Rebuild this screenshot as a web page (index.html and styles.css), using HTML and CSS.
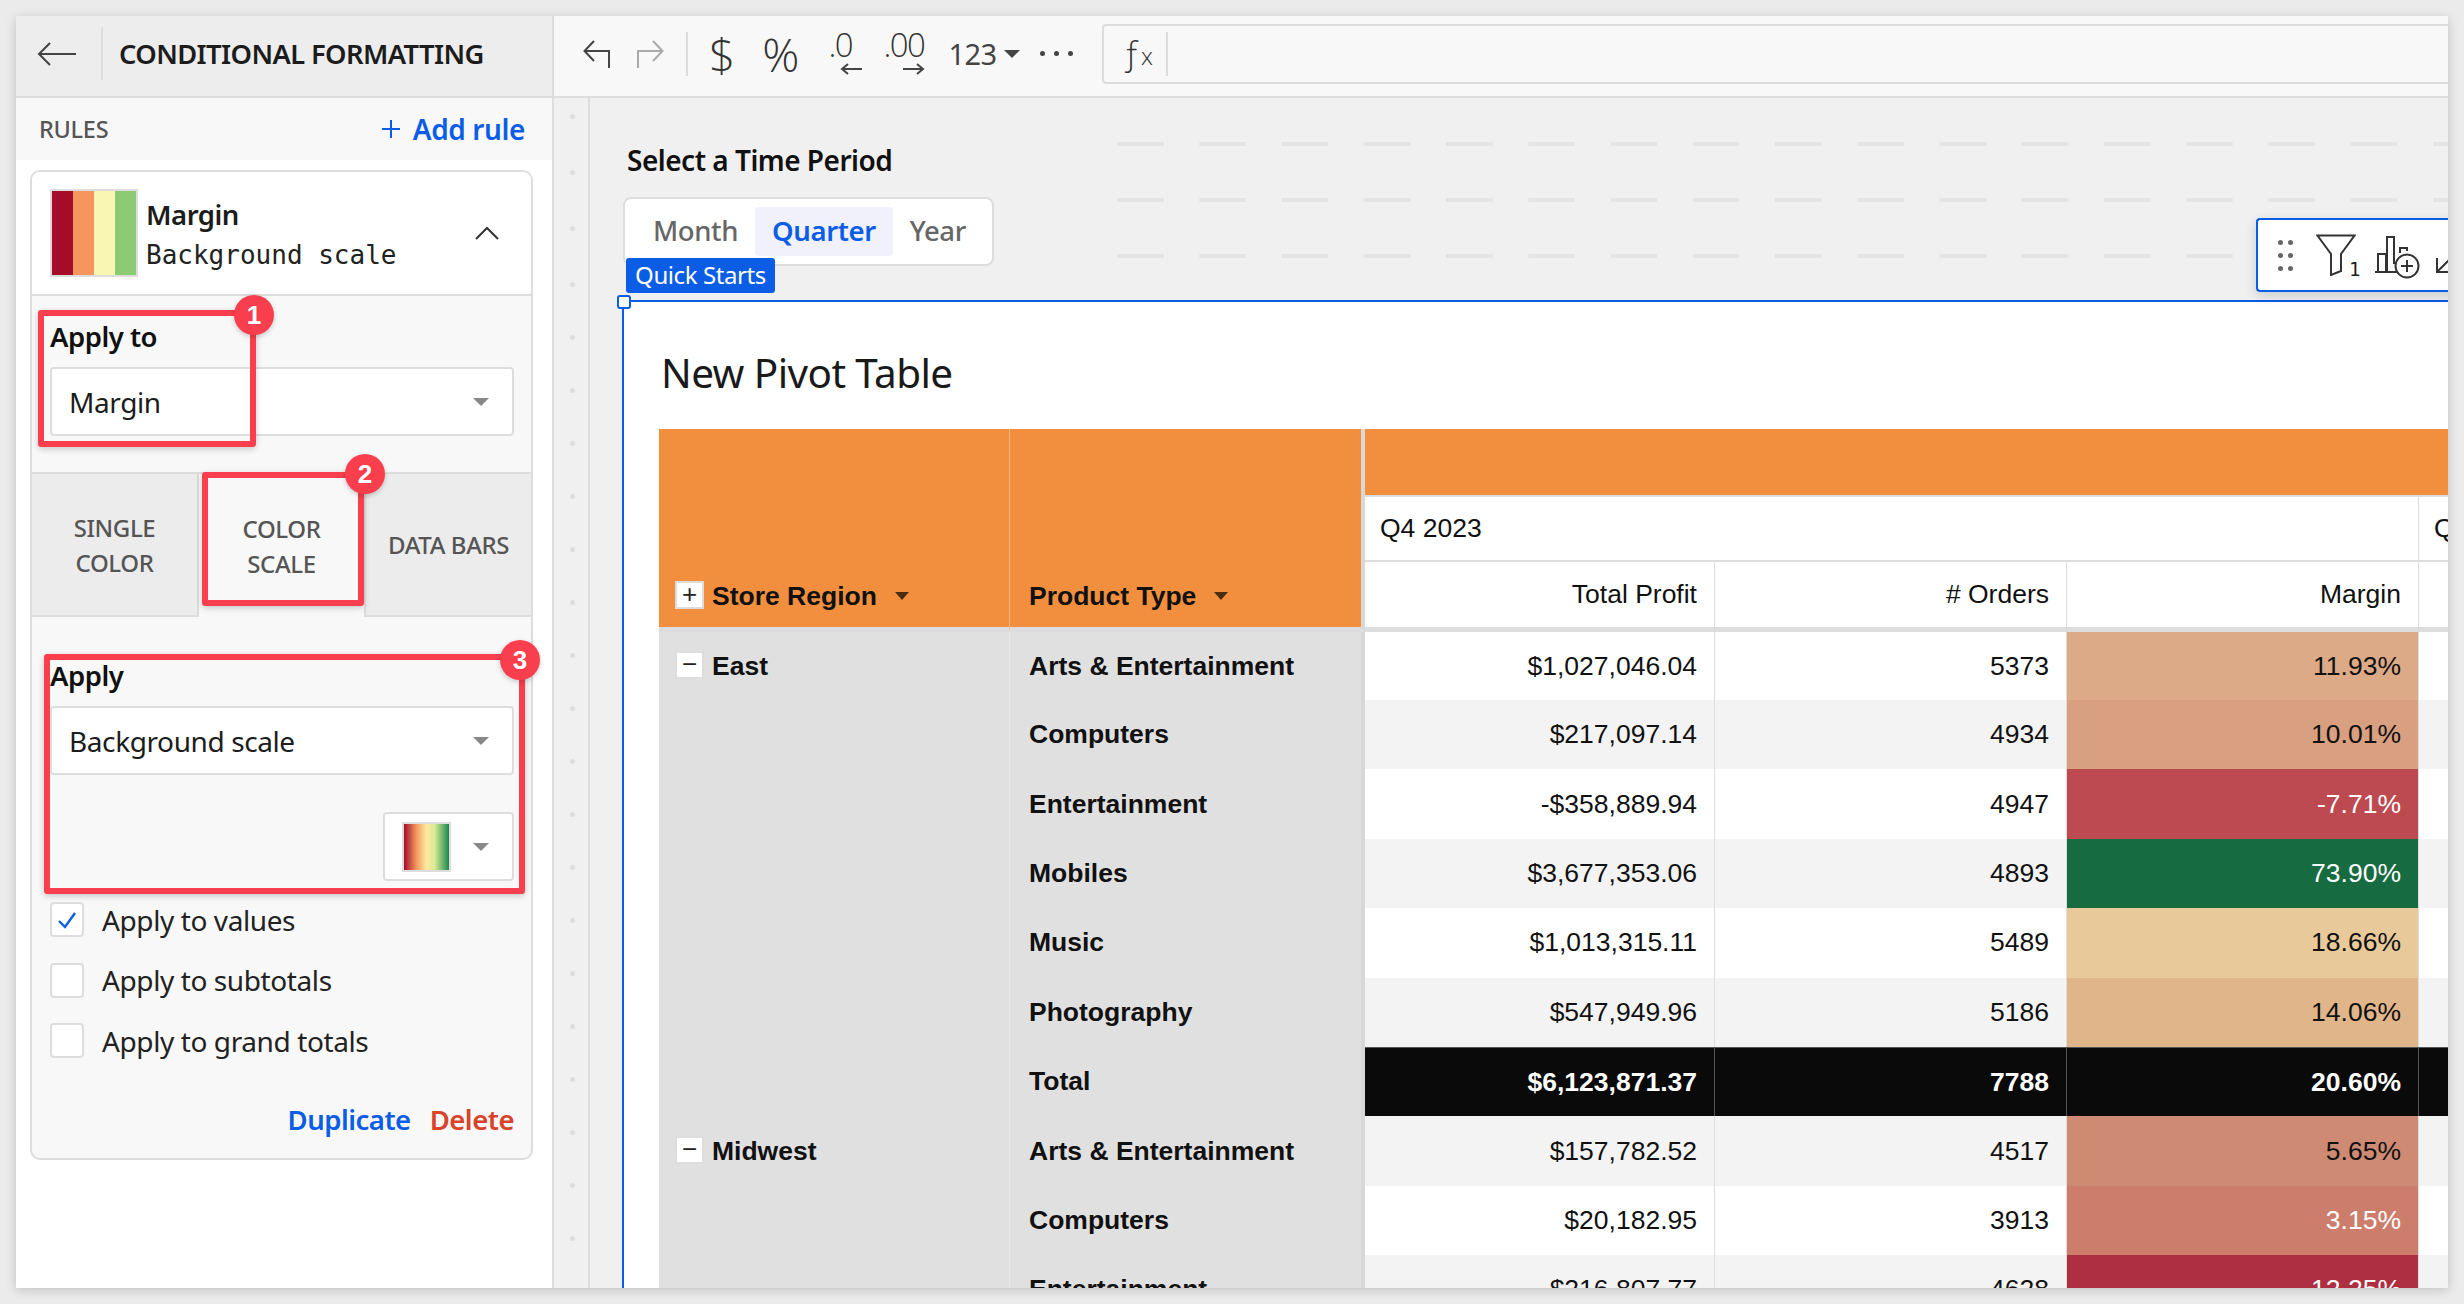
FILE: index.html
```html
<!DOCTYPE html>
<html>
<head>
  <title>Conditional formatting</title>
  <link rel="stylesheet" href="styles.css">
</head>
<body>
<div class="window">

  <!-- panneau gauche -->
  <aside class="panel">
    <div class="panel-head">
      <svg class="back" width="40" height="24" viewBox="0 0 40 24"><path d="M39 12H2M13 1 2 12l11 11" fill="none" stroke="#444" stroke-width="2"/></svg>
      <h1>CONDITIONAL FORMATTING</h1>
    </div>
    <div class="rules-bar">
      <span class="rules-label">RULES</span>
      <span class="add-rule"><svg width="18" height="18" viewBox="0 0 18 18"><path d="M9 0v18M0 9h18" stroke="#0b5de6" stroke-width="2"/></svg>Add rule</span>
    </div>

    <div class="rule-card">
      <div class="rule-head">
        <div class="swatch"><i class="c1"></i><i class="c2"></i><i class="c3"></i><i class="c4"></i></div>
        <div class="rule-title">
          <b>Margin</b>
          <code>Background scale</code>
        </div>
        <svg class="chevron" width="24" height="14" viewBox="0 0 24 14"><path d="M1 13 12 2l11 11" fill="none" stroke="#333" stroke-width="2"/></svg>
      </div>

      <div class="rule-field first">
        <label>Apply to</label>
        <div class="select"><span>Margin</span><i class="caret"></i></div>
      </div>

      <div class="tabs">
        <div class="tab">SINGLE<br>COLOR</div>
        <div class="tab active">COLOR<br>SCALE</div>
        <div class="tab">DATA BARS</div>
      </div>

      <div class="rule-field">
        <label>Apply</label>
        <div class="select"><span>Background scale</span><i class="caret"></i></div>
        <div class="scale-row">
          <div class="select scale-select"><i class="gradient"></i><i class="caret"></i></div>
        </div>
      </div>

      <div class="checks">
        <div class="check"><span class="box"><svg width="20" height="18" viewBox="0 0 20 18"><path d="M2 10l6 6L18 2" fill="none" stroke="#0b5de6" stroke-width="2.4"/></svg></span>Apply to values</div>
        <div class="check"><span class="box"></span>Apply to subtotals</div>
        <div class="check"><span class="box"></span>Apply to grand totals</div>
      </div>

      <div class="rule-actions">
        <span class="duplicate">Duplicate</span>
        <span class="delete">Delete</span>
      </div>
    </div>

    <!-- annotations rouges -->
    <div class="mark mark1"><span class="badge">1</span></div>
    <div class="mark mark2"><span class="badge">2</span></div>
    <div class="mark mark3"><span class="badge">3</span></div>
  </aside>

  <div class="main">
    <div class="toolbar">
      <svg class="undo" width="28" height="30" viewBox="0 0 28 30"><path d="M26 29V12H2M11 2 1.500 12 11 22" fill="none" stroke="#444" stroke-width="2"/></svg>
      <svg class="redo" width="28" height="30" viewBox="0 0 28 30"><path d="M2 29V12h24M17 2l9.500 10L17 22" fill="none" stroke="#aaa" stroke-width="2"/></svg>
      <span class="tb-sep"></span>
      <span class="glyph dollar">$</span>
      <span class="glyph percent">%</span>
      <span class="decimal less">.0<svg width="22" height="12" viewBox="0 0 22 12"><path d="M22 6H2M8 1 2 6l6 5" fill="none" stroke="#444" stroke-width="2"/></svg></span>
      <span class="decimal more">.00<svg width="22" height="12" viewBox="0 0 22 12"><path d="M0 6h20M14 1l6 5-6 5" fill="none" stroke="#444" stroke-width="2"/></svg></span>
      <span class="num-format">123</span>
      <i class="tb-caret"></i>
      <span class="more-dots"><i></i><i></i><i></i></span>
      <div class="formula">
        <span class="fx">ƒ<small>x</small></span>
        <span class="fx-sep"></span>
      </div>
    </div>

    <div class="work">
      <div class="ruler">
        <div class="ruler-top"><i></i><i></i><i></i></div>
        <div class="ruler-rest"><i></i><i></i><i></i><i></i><i></i><i></i><i></i><i></i><i></i><i></i><i></i><i></i><i></i><i></i><i></i><i></i><i></i><i></i><i></i><i></i></div>
      </div>

      <div class="canvas">
        <div class="dashes"></div>

        <div class="control">
          <div class="control-label">Select a Time Period</div>
          <div class="segment">
            <span>Month</span>
            <span class="on">Quarter</span>
            <span>Year</span>
          </div>
        </div>

        <div class="floating">
          <span class="grip"><i></i><i></i><i></i><i></i><i></i><i></i></span>
          <svg width="40" height="42" viewBox="0 0 40 42"><path d="M1.500 1.500h37L25 20v17l-10 4V20z" fill="none" stroke="#333" stroke-width="2"/></svg>
          <sub>1</sub>
          <svg class="chart-add" width="46" height="44" viewBox="0 0 46 44"><path d="M1 37h22M4 37V19h8v18M13 37V2h7v27M26 18v-5h7v3" fill="none" stroke="#333" stroke-width="2"/><circle cx="33" cy="31" r="11.500" fill="#fff" stroke="#333" stroke-width="2"/><path d="M33 25v12M27 31h12" stroke="#333" stroke-width="2"/></svg>
          <svg class="resize" width="20" height="16" viewBox="0 0 20 16"><path d="M2 1v14h12M2 15 16 1" fill="none" stroke="#333" stroke-width="2"/></svg>
        </div>

        <div class="card">
          <span class="tag">Quick Starts</span>
          <span class="handle"></span>
          <h2>New Pivot Table</h2>
          <table class="pivot">
            <colgroup>
              <col class="w-dim"><col class="w-dim2"><col class="w-m"><col class="w-m2"><col class="w-m2"><col class="w-m2">
            </colgroup>
            <thead>
              <tr class="h1">
                <th class="dim" rowspan="3"><span class="tree">+</span>Store Region<i class="th-caret"></i></th>
                <th class="dim dim2" rowspan="3">Product Type<i class="th-caret"></i></th>
                <th class="band" colspan="4"></th>
              </tr>
              <tr class="h2">
                <th class="period" colspan="3">Q4 2023</th>
                <th class="period">Q3 2023</th>
              </tr>
              <tr class="h3">
                <th>Total Profit</th>
                <th># Orders</th>
                <th>Margin</th>
                <th></th>
              </tr>
            </thead>
            <tbody>
              <tr class="row1">
                <td class="region"><span class="tree">&minus;</span>East</td><td class="ptype">Arts &amp; Entertainment</td>
                <td>$1,027,046.04</td><td>5373</td><td style="background:#dcaa87">11.93%</td><td></td>
              </tr>
              <tr class="alt">
                <td class="region"></td><td class="ptype">Computers</td>
                <td>$217,097.14</td><td>4934</td><td style="background:#d89f80">10.01%</td><td></td>
              </tr>
              <tr>
                <td class="region"></td><td class="ptype">Entertainment</td>
                <td>-$358,889.94</td><td>4947</td><td class="light" style="background:#bc4a50">-7.71%</td><td></td>
              </tr>
              <tr class="alt">
                <td class="region"></td><td class="ptype">Mobiles</td>
                <td>$3,677,353.06</td><td>4893</td><td class="light" style="background:#176b41">73.90%</td><td></td>
              </tr>
              <tr>
                <td class="region"></td><td class="ptype">Music</td>
                <td>$1,013,315.11</td><td>5489</td><td style="background:#e8c999">18.66%</td><td></td>
              </tr>
              <tr class="alt">
                <td class="region"></td><td class="ptype">Photography</td>
                <td>$547,949.96</td><td>5186</td><td style="background:#e1b58a">14.06%</td><td></td>
              </tr>
              <tr class="total">
                <td class="region"></td><td class="ptype">Total</td>
                <td>$6,123,871.37</td><td>7788</td><td>20.60%</td><td></td>
              </tr>
              <tr class="alt">
                <td class="region"><span class="tree">&minus;</span>Midwest</td><td class="ptype">Arts &amp; Entertainment</td>
                <td>$157,782.52</td><td>4517</td><td style="background:#cf8a73">5.65%</td><td></td>
              </tr>
              <tr>
                <td class="region"></td><td class="ptype">Computers</td>
                <td>$20,182.95</td><td>3913</td><td class="light" style="background:#cd7d6b">3.15%</td><td></td>
              </tr>
              <tr class="alt">
                <td class="region"></td><td class="ptype">Entertainment</td>
                <td>$216,807.77</td><td>4628</td><td class="light" style="background:#ae2f42">12.25%</td><td></td>
              </tr>
            </tbody>
          </table>
        </div>
      </div>
    </div>
  </div>
</div>
</body>
</html>
```

FILE: styles.css
```css
* {
  box-sizing: border-box;
}
html, body {
  margin: 0;
  height: 100%;
}
body {
  background-color: #ebebeb;
  padding: 16px;
  font-family: "Noto Sans", Arial, sans-serif;
  color: #1c1c1c;
  overflow: hidden;
}
.window {
  display: flex;
  width: 2432px;
  height: 1272px;
  background: #fff;
  box-shadow: 0 2px 10px rgba(0, 0, 0, 0.18);
  overflow: hidden;
}

/* panneau gauche */
.panel {
  position: relative;
  width: 538px;
  flex: none;
  border-right: 2px solid #ddd;
  background: #fff;
}
.panel-head {
  display: flex;
  align-items: center;
  height: 82px;
  padding-bottom: 5px;
  background: #ededed;
  border-bottom: 2px solid #ddd;
  position: relative;
}
.back {
  margin-left: 21px;
}
.panel-head h1 {
  margin: 0 0 0 42px;
  font-size: 27.300px;
  font-weight: 600;
  letter-spacing: -0.6px;
  color: #1c1c1c;
}
.panel-head::before {
  content: "";
  position: absolute;
  left: 85px;
  top: 11px;
  height: 53px;
  width: 2px;
  background: #ddd;
}
.rules-bar {
  display: flex;
  justify-content: space-between;
  align-items: center;
  height: 62px;
  padding: 0 27px 0 23px;
  background: #f8f8f8;
}
.rules-label {
  font-size: 23.500px;
  font-weight: 500;
  color: #555;
  letter-spacing: -0.3px;
}
.add-rule {
  display: flex;
  align-items: center;
  gap: 13px;
  font-size: 28px;
  font-weight: 600;
  color: #0b5de6;
  letter-spacing: -0.4px;
}
.rule-card {
  width: 503px;
  height: 990px;
  margin: 10px 0 0 14px;
  border: 2px solid #ddd;
  border-radius: 10px;
  background: #f8f8f8;
  overflow: hidden;
}
.rule-head {
  display: flex;
  align-items: center;
  height: 124px;
  padding: 0 32px 0 18px;
  background: #fff;
  border-bottom: 2px solid #ddd;
}
.swatch {
  display: flex;
  width: 88px;
  height: 88px;
  border: 2px solid #ddd;
}
.swatch i {
  flex: 1;
}
.c1 { background: #a50c2a; }
.c2 { background: #f6965e; }
.c3 { background: #f8f6b2; }
.c4 { background: #8cca74; }
.rule-title {
  flex: 1;
  margin-left: 8px;
  padding-top: 2px;
  display: flex;
  flex-direction: column;
  gap: 3px;
}
.rule-title b {
  font-size: 27.500px;
  font-weight: 600;
  letter-spacing: -0.5px;
  line-height: 38px;
}
.rule-title code {
  font-family: "DejaVu Sans Mono", "Liberation Mono", monospace;
  font-size: 26px;
  line-height: 36px;
  color: #222;
}
.rule-field {
  padding: 0 17px 0 18px;
}
.rule-field.first {
  height: 177px;
  padding-top: 22px;
}
.rule-field label {
  display: block;
  font-size: 27.500px;
  font-weight: 600;
  letter-spacing: -0.5px;
  line-height: 38px;
  color: #111;
}
.select {
  display: flex;
  align-items: center;
  justify-content: space-between;
  height: 69px;
  margin-top: 11px;
  padding: 0 23px 0 17px;
  background: #fff;
  border: 2px solid #ddd;
  border-radius: 4px;
  font-size: 28px;
  letter-spacing: -0.4px;
}
.caret {
  width: 0;
  height: 0;
  border-left: 8px solid transparent;
  border-right: 8px solid transparent;
  border-top: 8px solid #888;
}
.tabs {
  display: flex;
  height: 145px;
  margin-top: -1px;
}
.tab {
  flex: 1;
  display: flex;
  align-items: center;
  justify-content: center;
  background: #ececec;
  border-top: 2px solid #ddd;
  border-bottom: 2px solid #ddd;
  text-align: center;
  font-size: 24px;
  font-weight: 500;
  line-height: 35px;
  letter-spacing: -0.4px;
  color: #555;
}
.tab:nth-child(1) {
  border-right: 2px solid #ddd;
}
.tab:nth-child(3) {
  border-left: 2px solid #ddd;
}
.tab.active {
  background: #f8f8f8;
  border-bottom: none;
}
.tabs + .rule-field {
  padding-top: 40px;
}
.scale-row {
  display: flex;
  justify-content: flex-end;
  margin-top: 37px;
}
.scale-select {
  width: 131px;
  margin: 0;
  padding: 0 23px 0 17px;
}
.gradient {
  width: 49px;
  height: 50px;
  border: 2px solid #ddd;
  background: linear-gradient(90deg, #a50c2a, #f49a5e 28%, #fde9a0 50%, #d8ea96 68%, #1a8a4c);
}
.checks {
  padding: 21px 18px 0;
}
.check {
  display: flex;
  align-items: center;
  gap: 18px;
  height: 35px;
  margin-bottom: 25.500px;
  font-size: 28px;
  letter-spacing: -0.4px;
  color: #222;
}
.box {
  display: flex;
  align-items: center;
  justify-content: center;
  width: 34px;
  height: 35px;
  background: #fff;
  border: 2px solid #ddd;
  border-radius: 4px;
}
.rule-actions {
  display: flex;
  justify-content: flex-end;
  gap: 19px;
  margin-top: 43px;
  padding: 0 17px;
  font-size: 27.500px;
  font-weight: 600;
  letter-spacing: -0.5px;
}
.duplicate { color: #0b5de6; }
.delete { color: #d9432a; }

/* annotations */
.mark {
  position: absolute;
  border: 6px solid #f93e4d;
  border-radius: 3px;
  box-shadow: 0 2px 6px rgba(0, 0, 0, 0.2);
}
.mark1 { left: 22px; top: 294px; width: 218px; height: 137px; }
.mark2 { left: 186px; top: 456px; width: 162px; height: 134px; }
.mark3 { left: 28px; top: 638px; width: 481px; height: 240px; }
.badge {
  position: absolute;
  width: 40px;
  height: 40px;
  border-radius: 50%;
  background: #f93e4d;
  color: #fff;
  font-family: "Liberation Sans", Arial, sans-serif;
  font-size: 26px;
  font-weight: 700;
  line-height: 40px;
  text-align: center;
  box-shadow: 0 2px 5px rgba(0, 0, 0, 0.2);
}
.mark1 .badge { right: -24px; top: -21px; }
.mark2 .badge { right: -27px; top: -24px; }
.mark3 .badge { right: -21px; top: -20px; }

/* barre d'outils */
.main {
  flex: 1;
  min-width: 0;
  display: flex;
  flex-direction: column;
}
.toolbar {
  display: flex;
  align-items: center;
  flex: none;
  height: 82px;
  padding: 0 0 5px 29px;
  background: #f8f8f8;
  border-bottom: 2px solid #ddd;
  color: #444;
}
.redo { margin-left: 25px; }
.tb-sep {
  width: 2px;
  height: 44px;
  margin-left: 22px;
  background: #ddd;
}
.glyph {
  font-family: "Open Sans", sans-serif;
  font-weight: 300;
  color: #333;
  line-height: 60px;
}
.dollar { font-size: 46px; margin-left: 21px; }
.percent { font-size: 46px; margin-left: 27px; }
.decimal {
  display: flex;
  flex-direction: column;
  font-family: "Open Sans", sans-serif;
  font-weight: 300;
  font-size: 33px;
  line-height: 30px;
  color: #333;
  width: 40px;
  letter-spacing: -1.500px;
  padding-bottom: 2px;
}
.decimal svg { margin-top: 3px; }
.less { margin-left: 29px; }
.less svg { margin-left: 12px; }
.more { margin-left: 15px; }
.more svg { margin-left: 20px; }
.num-format {
  margin-left: 25px;
  font-size: 29px;
  color: #444;
  letter-spacing: -0.5px;
}
.tb-caret {
  width: 0;
  height: 0;
  margin-left: 7px;
  border-left: 8px solid transparent;
  border-right: 8px solid transparent;
  border-top: 8px solid #444;
}
.more-dots {
  display: flex;
  gap: 9px;
  margin-left: 20px;
}
.more-dots i {
  width: 5px;
  height: 5px;
  border-radius: 50%;
  background: #444;
}
.formula {
  flex: 1;
  display: flex;
  align-items: center;
  height: 60px;
  margin-left: 29px;
  background: #f8f8f8;
  border: 2px solid #ddd;
  border-right: none;
  border-radius: 4px 0 0 4px;
}
.fx {
  margin-left: 18px;
  width: 30px;
  font-family: "Open Sans", sans-serif;
  font-weight: 300;
  font-size: 34px;
  line-height: 44px;
  color: #333;
}
.fx small {
  font-size: 24px;
}
.fx-sep {
  width: 2px;
  height: 44px;
  margin-left: 14px;
  background: #ddd;
}

/* zone de travail */
.work {
  flex: 1;
  min-height: 0;
  display: flex;
}
.ruler {
  flex: none;
  width: 36px;
  padding-top: 16px;
  background: #f0f0f0;
  border-right: 2px solid #ddd;
}
.ruler i {
  display: block;
  width: 5px;
  height: 5px;
  margin-left: 16px;
  border-radius: 50%;
  background: #ddd;
}
.ruler-top i {
  margin-bottom: 51px;
}
.ruler-rest i {
  margin-bottom: 48px;
}
.canvas {
  position: relative;
  flex: 1;
  min-width: 0;
  background: #f0f0f0;
  overflow: hidden;
}
.dashes {
  position: absolute;
  left: 527px;
  top: 44px;
  right: 0;
  height: 116px;
  background-image: linear-gradient(90deg, #e4e4e4 47px, transparent 47px);
  background-size: 82.250px 56px;
  -webkit-mask-image: linear-gradient(#000 4px, transparent 4px);
  -webkit-mask-size: 100% 56px;
}
.control {
  position: relative;
  padding: 43px 0 0 33px;
}
.control-label {
  margin-left: 4px;
  font-size: 28px;
  font-weight: 600;
  letter-spacing: -0.5px;
  line-height: 38px;
  color: #111;
}
.segment {
  display: inline-flex;
  align-items: center;
  height: 69px;
  margin-top: 18px;
  padding: 0 9px 0 11px;
  background: #fff;
  border: 2px solid #ddd;
  border-radius: 8px;
  font-size: 27.500px;
  font-weight: 500;
  letter-spacing: -0.4px;
  color: #666;
}
.segment span {
  padding: 0 17px;
  height: 49px;
  line-height: 47px;
}
.segment .on {
  background: #f0f1fb;
  border-radius: 4px;
  color: #0b5de6;
  font-weight: 600;
}
.floating {
  position: absolute;
  left: 1666px;
  top: 120px;
  width: 220px;
  height: 74px;
  display: flex;
  align-items: center;
  padding-left: 20px;
  background: #fff;
  border: 2px solid #0b5de6;
  border-right: none;
  border-radius: 4px 0 0 4px;
  box-shadow: 0 4px 12px rgba(0, 0, 0, 0.15);
  z-index: 2;
}
.grip {
  display: grid;
  grid-template-columns: 5px 5px;
  gap: 8px 5px;
  margin-right: 23px;
}
.grip i {
  width: 5px;
  height: 5px;
  border-radius: 50%;
  background: #666;
}
.floating sub {
  align-self: flex-end;
  margin: 0 0 12px -7px;
  font-family: "DejaVu Sans Mono", monospace;
  font-size: 19px;
  line-height: 18px;
  color: #222;
}
.chart-add { margin-left: 14px; margin-top: 4px; }
.resize { margin-left: 15px; margin-top: 20px; flex: none; }

.card {
  position: absolute;
  left: 32px;
  top: 202px;
  width: 1900px;
  height: 1000px;
  background: #fff;
  border-top: 2px solid #0b5de6;
  border-left: 2px solid #0b5de6;
}
.tag {
  position: absolute;
  left: 2px;
  top: -44px;
  width: 149px;
  height: 35px;
  background: #0b5de6;
  border-radius: 3px;
  color: #fff;
  font-size: 24px;
  letter-spacing: -0.4px;
  line-height: 34px;
  text-align: center;
}
.handle {
  position: absolute;
  left: -7px;
  top: -7px;
  width: 14px;
  height: 14px;
  background: #fff;
  border: 2px solid #0b5de6;
  border-radius: 3px;
}
.card h2 {
  margin: 0;
  padding: 44px 0 0 37px;
  height: 127px;
  font-size: 40.500px;
  font-weight: 400;
  line-height: 54px;
  letter-spacing: -0.6px;
  color: #1a1a1a;
}

/* tableau */
.pivot {
  table-layout: fixed;
  width: 1755px;
  margin-left: 35px;
  border-collapse: separate;
  border-spacing: 0;
  font-family: "Liberation Sans", Arial, sans-serif;
  font-size: 26.500px;
  color: #111;
}
.w-dim { width: 351px; }
.w-dim2 { width: 355px; }
.w-m { width: 350px; }
.w-m2 { width: 352px; }
.pivot th {
  font-weight: 400;
  padding: 0 17px 0 0;
  text-align: right;
  white-space: nowrap;
  overflow: hidden;
}
.pivot th.dim {
  padding: 0 0 0 16px;
  vertical-align: bottom;
  text-align: left;
  background: #f18f3f;
  border-right: 1px solid #f5b684;
  border-bottom: 5px solid #ddd;
  font-weight: 700;
  line-height: 62px;
}
.pivot th.dim2 {
  padding-left: 19px;
  border-right: 4px solid #d8d8d8;
}
.h1 { height: 68px; }
.h2 { height: 65px; }
.h3 { height: 70px; }
.pivot th.band {
  background: #f18f3f;
  border-bottom: 2px solid #ddd;
}
.pivot th.period {
  padding: 0 0 0 15px;
  text-align: left;
  border-bottom: 2px solid #ddd;
  border-right: 1px solid #ddd;
}
.h3 th {
  border-bottom: 5px solid #ddd;
  border-right: 1px solid #ddd;
}
.tree {
  display: inline-block;
  width: 29px;
  height: 28px;
  margin-right: 8px;
  background: #fff;
  border: 2px solid #ddd;
  font-weight: 400;
  font-size: 26px;
  line-height: 23px;
  text-align: center;
  vertical-align: 2px;
  color: #222;
}
.th-caret {
  display: inline-block;
  width: 0;
  height: 0;
  margin-left: 18px;
  vertical-align: 5px;
  border-left: 7px solid transparent;
  border-right: 7px solid transparent;
  border-top: 8px solid #4a2c10;
}
.pivot td {
  height: 69.400px;
  padding: 0 17px 0 0;
  text-align: right;
  white-space: nowrap;
  border-right: 1px solid #ddd;
}
.pivot .row1 td {
  height: 68px;
}
.pivot .alt td {
  background: #f3f3f3;
}
.pivot td.region,
.pivot td.ptype {
  padding: 0 0 0 16px;
  text-align: left;
  font-weight: 700;
  background: #e0e0e0;
  border-right: 1px solid #e8e8e8;
}
.pivot td.ptype {
  padding-left: 19px;
  border-right: 4px solid #d8d8d8;
}
.pivot td.light {
  color: #fff;
}
.pivot .total td:not(.region):not(.ptype) {
  background: #0a0a0a;
  color: #fff;
  font-weight: 700;
  border-top: 1px solid #555;
  border-right: 1px solid #555;
}
```
